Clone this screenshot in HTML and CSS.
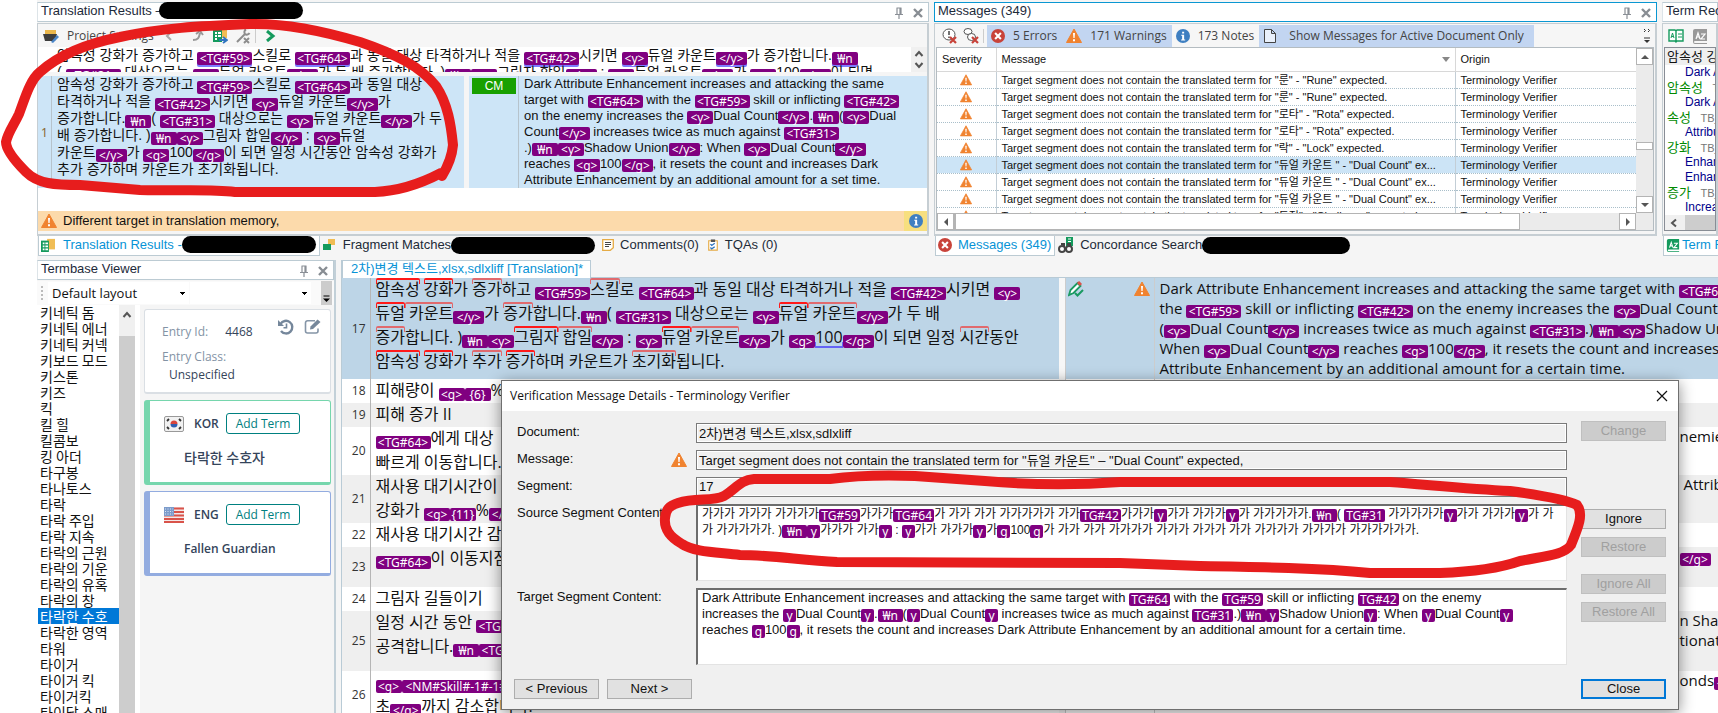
FILE: index.html
```html
<!DOCTYPE html>
<html lang="en">
<head>
<meta charset="utf-8">
<title>Translation Editor</title>
<link rel="stylesheet" href="styles.css">
</head>
<body>
<svg class="defs" aria-hidden="true">
  <symbol id="warn" viewBox="0 0 16 16"><path d="M8 1 15.5 14.5H.5Z" fill="#f08330" stroke="#f08330" stroke-linejoin="round"/><path d="M7 5h2l-.4 5H7.4zM7 11.2h2v2H7z" fill="#fff"/></symbol>
  <symbol id="err" viewBox="0 0 16 16"><circle cx="8" cy="8" r="8" fill="#c8433a"/><path d="m4.7 4.7 6.6 6.6m0-6.6-6.6 6.6" stroke="#fff" stroke-width="2.4"/></symbol>
  <symbol id="info" viewBox="0 0 16 16"><circle cx="8" cy="8" r="8" fill="#3f7fc1"/><path d="M7 3h2.3v2.2H7zM6 6.5h3.3V12h1.2v1.2H5.8V12H7V7.7H6z" fill="#fff"/></symbol>
  <symbol id="pin" viewBox="0 0 12 14"><path d="M3.5 2h5M4 2v6m3-6v6m1-6v6M2 8.5h8M6 9v4" fill="none" stroke="#8a8f96" stroke-width="1.2"/></symbol>
  <symbol id="x" viewBox="0 0 12 12"><path d="m2 2 8 8m0-8-8 8" stroke="#888d93" stroke-width="2.4"/></symbol>
  <symbol id="up" viewBox="0 0 10 10"><path d="m1.5 7 3.5-4 3.5 4" fill="none" stroke="#555" stroke-width="2"/></symbol>
  <symbol id="down" viewBox="0 0 10 10"><path d="m1.5 3 3.5 4 3.5-4" fill="none" stroke="#555" stroke-width="2"/></symbol>
  <symbol id="book" viewBox="0 0 16 16"><path d="M3 1h12v12H3a1 1 0 0 0 0 2h12v1H3a2 2 0 0 1-2-2V3a2 2 0 0 1 2-2z" fill="currentColor"/><path d="m4 11 2-6 2 6M4.8 9h2.4M9 6h4l-4 5h4" fill="none" stroke="#fff" stroke-width="1.2"/></symbol>
  <symbol id="memory" viewBox="0 0 16 16"><path d="M7 1h9v12H7z" fill="#f0bd55"/><path d="M0 3h9v13H0z" fill="#149a5d"/><path d="M2 5h2v2H2zm3 0h3v2H5zM2 8.500h2v2H2zm3 0h3v2H5zM2 12h2v2H2zm3 0h3v2H5z" fill="#fff"/></symbol>
</svg>

<main class="app">
<div class="top">
  <section class="dock">
    <header class="title"><span>Translation Results –</span><i class="pill pill-head"></i><span class="tools"><svg class="i14"><use href="#pin"/></svg><svg class="i12"><use href="#x"/></svg></span></header>
    <div class="frame">
      <div class="toolbar">
        <svg class="i16" viewBox="0 0 16 16"><path d="M2 2h11v4H2z" fill="#e9b64b"/><path d="M0 6h14l-2 7H2z" fill="#3d3d3d"/><path d="m8 14 6-7 2 2-6 6z" fill="#4a86c8"/></svg>
        <span class="proj">Project Settings</span>
        <svg class="ic-left" viewBox="0 0 14 14"><path d="m9 3-4 4 4 4" fill="none" stroke="#aaa" stroke-width="2"/></svg>
        <svg class="i14" viewBox="0 0 14 14"><path d="M3 11C8 11 9 9 10 4M6 5l4-3 3 4" fill="none" stroke="#999" stroke-width="2"/></svg>
        <svg class="i16" viewBox="0 0 16 16"><path d="M7 2h8v8H7z" fill="#f0bd55"/><path d="M1 2h9v12H1z" fill="#149a5d"/><path d="M3 4h2v2H3zm3 0h3v2H6zM3 7h2v2H3zm3 0h3v2H6zM3 10h2v2H3z" fill="#fff"/><path d="M7 12h7m-3-3 4 3-4 3" fill="none" stroke="#2f75c0" stroke-width="1.800"/></svg>
        <svg class="i16" viewBox="0 0 16 16"><path d="m2 14 8-8M10 6a3 3 0 0 1 1-4.500M10 6a3 3 0 0 0 4.500-1M9 10l5 5m0-5-5 5" fill="none" stroke="#8d8d8d" stroke-width="2"/></svg>
        <i class="sep"></i>
        <svg class="i12" viewBox="0 0 12 12"><path d="m3 1 6 5-6 5" fill="none" stroke="#149a5d" stroke-width="3"/></svg>
      </div>
      <div class="lookup">
        <div class="lookup-text ko">
          <p>암속성 강화가 증가하고 <b class="tg u">&lt;TG#59&gt;</b>스킬로 <b class="tg u">&lt;TG#64&gt;</b>과 동일 대상 타격하거나 적을 <b class="tg u">&lt;TG#42&gt;</b>시키면 <b class="y u">&lt;y&gt;</b>듀얼 카운트<b class="yy u">&lt;/y&gt;</b>가 증가합니다.<b class="y u">₩n</b></p>
          <p>( <b class="tg">&lt;TG#31&gt;</b> 대상으로는 <b class="y">&lt;y&gt;</b>듀얼 카운트<b class="yy">&lt;/y&gt;</b>가 두 배 증가합니다. )<b class="y">₩n</b><b class="y">&lt;y&gt;</b>그림자 합일<b class="yy">&lt;/y&gt;</b> : <b class="y">&lt;y&gt;</b>듀얼 카운트<b class="yy">&lt;/y&gt;</b>가 <b class="y">&lt;g&gt;</b>100<b class="yy">&lt;/g&gt;</b>이 되면</p>
        </div>
        <div class="mini-scroll"><svg class="i10"><use href="#up"/></svg><svg class="i10"><use href="#down"/></svg></div>
      </div>
      <div class="result">
        <div class="rnum">1</div>
        <div class="rsrc ko">
          <p>암속성 강화가 증가하고 <b class="tg">&lt;TG#59&gt;</b>스킬로 <b class="tg">&lt;TG#64&gt;</b>과 동일 대상</p>
          <p>타격하거나 적을 <b class="tg">&lt;TG#42&gt;</b>시키면 <b class="y">&lt;y&gt;</b>듀얼 카운트<b class="yy">&lt;/y&gt;</b>가</p>
          <p>증가합니다.<b class="y">₩n</b>( <b class="tg">&lt;TG#31&gt;</b> 대상으로는 <b class="y">&lt;y&gt;</b>듀얼 카운트<b class="yy">&lt;/y&gt;</b>가 두</p>
          <p>배 증가합니다. )<b class="y">₩n</b><b class="y">&lt;y&gt;</b>그림자 합일<b class="yy">&lt;/y&gt;</b> : <b class="y">&lt;y&gt;</b>듀얼</p>
          <p>카운트<b class="yy">&lt;/y&gt;</b>가 <b class="y">&lt;g&gt;</b>100<b class="yy">&lt;/g&gt;</b>이 되면 일정 시간동안 암속성 강화가</p>
          <p>추가 증가하며 카운트가 초기화됩니다.</p>
        </div>
        <i class="gap"></i>
        <div class="rcm"><span>CM</span></div>
        <div class="rtgt en">
          <p>Dark Attribute Enhancement increases and attacking the same</p>
          <p>target with <b class="tg">&lt;TG#64&gt;</b> with the <b class="tg">&lt;TG#59&gt;</b> skill or inflicting <b class="tg">&lt;TG#42&gt;</b></p>
          <p>on the enemy increases the <b class="y">&lt;y&gt;</b>Dual Count<b class="yy">&lt;/y&gt;</b>.<b class="y">₩n</b>(<b class="y">&lt;y&gt;</b>Dual</p>
          <p>Count<b class="yy">&lt;/y&gt;</b> increases twice as much against <b class="tg">&lt;TG#31&gt;</b></p>
          <p>.)<b class="y">₩n</b><b class="y">&lt;y&gt;</b>Shadow Union<b class="yy">&lt;/y&gt;</b>: When <b class="y">&lt;y&gt;</b>Dual Count<b class="yy">&lt;/y&gt;</b></p>
          <p>reaches <b class="y">&lt;g&gt;</b>100<b class="yy">&lt;/g&gt;</b>, it resets the count and increases Dark</p>
          <p>Attribute Enhancement by an additional amount for a set time.</p>
        </div>
      </div>
      <div class="filler"></div>
      <div class="notice"><svg class="i16"><use href="#warn"/></svg><span>Different target in translation memory,</span><em><svg class="i14"><use href="#info"/></svg></em></div>
    </div>
    <nav class="tabs">
      <a href="#" class="tab on"><svg class="i14"><use href="#memory"/></svg>Translation Results -<i class="pill pill-tab"></i></a>
      <a href="#" class="tab"><svg class="i12" viewBox="0 0 12 12"><path d="M5 0h7v6H5z" fill="#f0bd55"/><path d="M0 5h8v6H0z" fill="#149a5d"/></svg>Fragment Matches<i class="pill pill-frag"></i></a>
      <a href="#" class="tab slim"><svg class="i12" viewBox="0 0 12 12"><path d="M.7.7h10.600v8l-3 2.600H.7z" fill="#fff" stroke="#e5ab45" stroke-width="1.300"/><path d="M3 3.500h6M3 5.500h6M3 7.500h4" stroke="#444"/></svg>Comments(0)</a>
      <a href="#" class="tab slim"><svg class="i12" viewBox="0 0 12 14"><path d="M1 2h10v11H1z" fill="#fff" stroke="#e5ab45" stroke-width="1.300"/><path d="M3.500.5h5v3h-5z" fill="#555"/><path d="m3 6 1.500 1.500L8 5M3 10l1.500 1.500L8 9" fill="none" stroke="#2f75c0" stroke-width="1.500"/></svg>TQAs (0)</a>
    </nav>
  </section>

  <section class="dock">
    <header class="title active"><span>Messages (349)</span><span class="tools"><svg class="i14"><use href="#pin"/></svg><svg class="i12"><use href="#x"/></svg></span></header>
    <div class="frame">
      <div class="toolbar msgbar">
        <svg class="i16" viewBox="0 0 16 16"><ellipse cx="7" cy="6.500" rx="6" ry="5.500" fill="#fff" stroke="#555"/><path d="M7 3v4m0 1.500V10" stroke="#444" stroke-width="1.500"/><path d="m8 9 6 6m0-6-6 6" stroke="#c8433a" stroke-width="2.200"/></svg>
        <svg class="i16" viewBox="0 0 16 16"><ellipse cx="5" cy="3.500" rx="4" ry="3" fill="#fff" stroke="#555"/><ellipse cx="8.500" cy="9" rx="4" ry="3.500" fill="#fff" stroke="#555"/><path d="m9 9 6 6m0-6-6 6" stroke="#c8433a" stroke-width="2.200"/></svg>
        <i class="sep"></i>
        <button class="tb on" type="button"><svg class="i14"><use href="#err"/></svg>5 Errors</button>
        <button class="tb on" type="button"><svg class="i16"><use href="#warn"/></svg>171 Warnings</button>
        <button class="tb" type="button"><svg class="i14"><use href="#info"/></svg>173 Notes</button>
        <button class="tb on wide" type="button"><svg class="i14" viewBox="0 0 14 14"><path d="M1.500.5h7l4 4v9h-11zM8.500.5v4h4" fill="#e9f0fb" stroke="#444"/></svg>Show Messages for Active Document Only</button>
        <svg class="more" viewBox="0 0 8 16"><path d="m1 1 1.500 1.500L1 4m4-3 1.500 1.500L5 4M1 10h6" fill="none" stroke="#333"/><path d="M1 12h6L4 15z" fill="#333"/></svg>
      </div>
      <div class="listbox">
        <div class="view">
        <table class="msgs">
          <colgroup><col class="c1"><col class="c2"><col class="c3"></colgroup>
          <thead><tr><th>Severity</th><th>Message<svg class="sort" viewBox="0 0 8 5"><path d="M0 0h8L4 5z" fill="#888"/></svg></th><th>Origin</th></tr></thead>
          <tbody>
          <tr><td><svg class="i12"><use href="#warn"/></svg></td><td>Target segment does not contain the translated term for "룬" - "Rune" expected.</td><td>Terminology Verifier</td></tr>
          <tr><td><svg class="i12"><use href="#warn"/></svg></td><td>Target segment does not contain the translated term for "룬" - "Rune" expected.</td><td>Terminology Verifier</td></tr>
          <tr><td><svg class="i12"><use href="#warn"/></svg></td><td>Target segment does not contain the translated term for "로타" - "Rota" expected.</td><td>Terminology Verifier</td></tr>
          <tr><td><svg class="i12"><use href="#warn"/></svg></td><td>Target segment does not contain the translated term for "로타" - "Rota" expected.</td><td>Terminology Verifier</td></tr>
          <tr><td><svg class="i12"><use href="#warn"/></svg></td><td>Target segment does not contain the translated term for "락" - "Lock" expected.</td><td>Terminology Verifier</td></tr>
          <tr class="sel"><td><svg class="i12"><use href="#warn"/></svg></td><td>Target segment does not contain the translated term for "듀얼 카운트 " - "Dual Count" ex...</td><td>Terminology Verifier</td></tr>
          <tr><td><svg class="i12"><use href="#warn"/></svg></td><td>Target segment does not contain the translated term for "듀얼 카운트 " - "Dual Count" ex...</td><td>Terminology Verifier</td></tr>
          <tr><td><svg class="i12"><use href="#warn"/></svg></td><td>Target segment does not contain the translated term for "듀얼 카운트 " - "Dual Count" ex...</td><td>Terminology Verifier</td></tr>
          <tr><td><svg class="i12"><use href="#warn"/></svg></td><td>Target segment does not contain the translated term for "도전" - "Challenge" expected.</td><td>Terminology Verifier</td></tr>
          </tbody>
        </table>
        </div>
        <div class="vs"><i class="sb"><svg viewBox="0 0 8 8"><path d="M0 6h8L4 2z"/></svg></i><i class="vthumb"></i><i class="sb"><svg viewBox="0 0 8 8"><path d="M0 2h8L4 6z"/></svg></i></div>
        <div class="hs"><i class="sb"><svg viewBox="0 0 8 8"><path d="M6 0v8L2 4z"/></svg></i><i class="hthumb"></i><i class="sb end"><svg viewBox="0 0 8 8"><path d="M2 0v8l4-4z"/></svg></i></div>
      </div>
    </div>
    <nav class="tabs">
      <a href="#" class="tab on msgtab"><svg class="i14"><use href="#err"/></svg>Messages (349)</a>
      <a href="#" class="tab conc"><svg class="i16" viewBox="0 0 16 16"><path d="M8 0h7v9H8z" fill="#149a5d"/><path d="M10 2h3M10 4.500h3" stroke="#fff"/><circle cx="4" cy="12" r="3" fill="#fff" stroke="#444" stroke-width="2"/><circle cx="11" cy="12" r="3" fill="#fff" stroke="#444" stroke-width="2"/><path d="M3 7h3v3M9 7h3v3" fill="none" stroke="#444" stroke-width="2"/></svg>Concordance Search<i class="pill pill-conc"></i></a>
    </nav>
  </section>

  <section class="dock">
    <header class="title"><span>Term Recognition</span></header>
    <div class="frame">
      <div class="toolbar termbar">
        <svg class="i16 green" viewBox="0 0 16 16"><path d="M1 2h6l1 1 1-1h6v11H9l-1 1-1-1H1zM8 3v10" fill="#fff" stroke="#149a5d" stroke-width="1.400"/><path d="m3 10 1.500-5L6 10M3.500 8.500h2M10 6h4M10 9h4" fill="none" stroke="#149a5d"/></svg>
        <svg class="i16 gray"><use href="#book"/></svg>
        <svg class="i16 green"><use href="#book"/></svg>
      </div>
      <div class="terms">
        <p class="h">암속성 강화</p>
        <p class="d">Dark Attribute</p>
        <p class="g">암속성 <small>TB_</small></p>
        <p class="d">Dark Attribute</p>
        <p class="g">속성 <small>TB_</small></p>
        <p class="d">Attribute</p>
        <p class="g">강화 <small>TB_</small></p>
        <p class="d">Enhance</p>
        <p class="d">Enhancement</p>
        <p class="g">증가 <small>TB_</small></p>
        <p class="d">Increase</p>
        <div class="tscroll"><svg class="i10" viewBox="0 0 10 10"><path d="M7 1.500 3 5l4 3.500" fill="none" stroke="#555" stroke-width="2"/></svg><i></i></div>
      </div>
    </div>
    <nav class="tabs"><a href="#" class="tab on last"><svg class="i14 green"><use href="#book"/></svg>Term Recognition</a></nav>
  </section>
</div>

<div class="bottom">
  <section class="dock termbase">
    <header class="title"><span>Termbase Viewer</span><span class="tools"><svg class="i14"><use href="#pin"/></svg><svg class="i12"><use href="#x"/></svg></span></header>
    <div class="layoutbar">
      <i class="grip"></i>
      <select class="sel1" aria-label="Layout"><option>Default layout</option></select>
      <select class="sel2" aria-label="Filter"><option></option></select>
      <svg class="ovf" viewBox="0 0 11 24"><path d="M0 0h11v24H0z" fill="#ccc"/><path d="M2.500 15h6" stroke="#000"/><path d="M2 17.500h7L5.500 21z"/></svg>
    </div>
    <div class="tbody">
      <ul class="words">
        <li>키네틱 돔</li><li>키네틱 에너</li><li>키네틱 커넥</li><li>키보드 모드</li><li>키스톤</li><li>키즈</li><li>킥</li><li>킬 힐</li><li>킬콤보</li><li>킹 아더</li><li>타구봉</li><li>타나토스</li><li>타락</li><li>타락 주입</li><li>타락 지속</li><li>타락의 근원</li><li>타락의 기운</li><li>타락의 유혹</li><li>타락의 창</li><li class="sel">타락한 수호</li><li>타락한 영역</li><li>타워</li><li>타이거</li><li>타이거 킥</li><li>타이거킥</li><li>타이달 스매</li>
      </ul>
      <div class="wscroll"><svg class="i10"><use href="#up"/></svg><i></i></div>
      <div class="cards">
        <article class="card entry">
          <div class="eid"><span>Entry Id:</span><strong>4468</strong>
            <svg class="i16" viewBox="0 0 16 16"><path d="M2.500 5A6.300 6.300 0 1 1 3 12" fill="none" stroke="#75879b" stroke-width="2.400"/><path d="M0 1v6h6z" fill="#75879b"/><path d="M8.500 4.500v4.200H5.500" fill="none" stroke="#75879b" stroke-width="1.600"/></svg>
            <svg class="i18" viewBox="0 0 18 16"><path d="M11 1.800H3.500a2 2 0 0 0-2 2V12a2 2 0 0 0 2 2H12a2 2 0 0 0 2-2V9.500" fill="none" stroke="#8595a7" stroke-width="1.600"/><path d="m6 10.500.5-3L13.500.500l3 2.500-7.500 7z" fill="#75879b"/></svg>
          </div>
          <div class="ecl">Entry Class:</div>
          <div class="eun">Unspecified</div>
        </article>
        <article class="card kor">
          <div class="lang">
            <svg class="flag" viewBox="0 0 20 16"><rect x=".5" y=".5" width="19" height="15" rx="1.500" fill="#f1f1f1" stroke="#999"/><path d="M6.500 8a3.500 3.500 0 0 1 7 0z" fill="#d8453c"/><path d="M6.500 8a3.500 3.500 0 0 0 7 0z" fill="#2f5fb0"/><path d="m3 5 2-2m-2 8 2 2m10-10 2 2m-2 8 2-2" stroke="#333" stroke-width="1.800"/></svg>
            <strong>KOR</strong><button type="button">Add Term</button></div>
          <div class="term">타락한 수호자</div>
        </article>
        <article class="card eng">
          <div class="lang">
            <svg class="flag" viewBox="0 0 20 16"><rect width="20" height="16" rx="1.500" fill="#f3e9e9"/><path d="M0 1.500h20M0 5h20M0 8.500h20M0 12h20M0 15h20" stroke="#d9534a" stroke-width="1.800"/><path d="M0 0h10v9H0z" fill="#7c9ccb"/><path d="M1 2h8M1 4.500h8M1 7h8" stroke="#dce6f5" stroke-dasharray="1 1.500"/></svg>
            <strong>ENG</strong><button type="button">Add Term</button></div>
          <div class="term">Fallen Guardian</div>
        </article>
      </div>
    </div>
  </section>

  <section class="editor">
    <div class="etabs"><a href="#">2차)변경 텍스트,xlsx,sdlxliff [Translation]*</a></div>
    <table class="grid">
      <colgroup><col class="n"><col class="s"><col class="gp"><col class="st"><col class="t"></colgroup>
      <tbody>
      <tr class="cur h100"><td>17</td><td class="k">
        <p><span class="m">암속성</span> <span class="m">강화</span>가 <span class="m l">증가</span>하고 <b class="tg">&lt;TG#59&gt;</b><span class="m l">스킬</span>로 <b class="tg">&lt;TG#64&gt;</b>과 동일 대상 타격하거나 적을 <b class="tg">&lt;TG#42&gt;</b>시키면 <b class="y">&lt;y&gt;</b></p>
        <p><span class="m">듀얼</span><span class="m l"> 카운트</span><b class="yy">&lt;/y&gt;</b>가 <span class="m l">증가</span>합니다.<b class="y">₩n</b>( <b class="tg">&lt;TG#31&gt;</b> 대상으로는 <b class="y">&lt;y&gt;</b><span class="m">듀얼</span><span class="m l"> 카운트</span><b class="yy">&lt;/y&gt;</b>가 두 배</p>
        <p><span class="m l">증가</span>합니다. )<b class="y">₩n</b><b class="y">&lt;y&gt;</b><span class="m">그림자</span><span class="m l"> 합일</span><b class="yy">&lt;/y&gt;</b> : <b class="y">&lt;y&gt;</b><span class="m">듀얼</span><span class="m l"> 카운트</span><b class="yy">&lt;/y&gt;</b>가 <b class="y">&lt;g&gt;</b><span class="m num">100</span><b class="yy">&lt;/g&gt;</b>이 되면 일정 <span class="m l">시간</span>동안</p>
        <p><span class="m">암속성</span> <span class="m">강화</span>가 <span class="m l">추가</span> <span class="m">증가</span>하며 카운트가 <span class="m l">초기화</span>됩니다.</p>
      </td><td></td><td class="status"><div>
        <svg class="i16" viewBox="0 0 16 16"><path d="m1 14 1.500-5 7-7 3 3-7 7z" fill="#fff" stroke="#1a9a62" stroke-width="1.800"/><path d="m10 1 3 3" stroke="#d9534a" stroke-width="3"/><path d="m7 12 2.500 2.500L15 9" fill="none" stroke="#1a9a62" stroke-width="2"/></svg>
        <svg class="i16"><use href="#warn"/></svg></div></td><td class="e">
        <p>Dark Attribute Enhancement increases and attacking the same target with <b class="tg">&lt;TG#64&gt;</b></p>
        <p>the <b class="tg">&lt;TG#59&gt;</b> skill or inflicting <b class="tg">&lt;TG#42&gt;</b> on the enemy increases the <b class="y">&lt;y&gt;</b>Dual Count</p>
        <p>(<b class="y">&lt;y&gt;</b>Dual Count<b class="yy">&lt;/y&gt;</b> increases twice as much against <b class="tg">&lt;TG#31&gt;</b>.)<b class="y">₩n</b><b class="y">&lt;y&gt;</b>Shadow Union</p>
        <p>When <b class="y">&lt;y&gt;</b>Dual Count<b class="yy">&lt;/y&gt;</b> reaches <b class="y">&lt;g&gt;</b>100<b class="yy">&lt;/g&gt;</b>, it resets the count and increases Dark</p>
        <p>Attribute Enhancement by an additional amount for a certain time.</p>
      </td></tr>
      <tr class="h24"><td>18</td><td class="k"><p>피해량이 <b class="y">&lt;g&gt;</b><b class="y">{6}</b>%</p></td><td></td><td></td><td></td></tr>
      <tr class="h24 alt"><td>19</td><td class="k"><p>피해 증가 II</p></td><td></td><td></td><td></td></tr>
      <tr class="h48"><td>20</td><td class="k"><p><b class="tg">&lt;TG#64&gt;</b>에게 대상</p><p>빠르게 이동합니다.</p></td><td></td><td></td><td class="e tail"><p>nemies</p></td></tr>
      <tr class="h48 alt"><td>21</td><td class="k"><p>재사용 대기시간이</p><p>강화가 <b class="y">&lt;g&gt;</b><b class="y">{11}</b>%<b class="yy">&lt;/g&gt;</b></p></td><td></td><td></td><td class="e tail"><p>&nbsp;Attribute</p></td></tr>
      <tr class="h24"><td>22</td><td class="k"><p>재사용 대기시간 감소</p></td><td></td><td></td><td></td></tr>
      <tr class="h40 alt"><td>23</td><td class="k"><p><b class="tg">&lt;TG#64&gt;</b>이 이동지점</p></td><td></td><td></td><td class="e tail"><p><b class="yy">&lt;/g&gt;</b></p></td></tr>
      <tr class="h24"><td>24</td><td class="k"><p>그림자 길들이기</p></td><td></td><td></td><td></td></tr>
      <tr class="h60 alt"><td>25</td><td class="k"><p>일정 시간 동안 <b class="tg">&lt;TG#64&gt;</b></p><p>공격합니다.<b class="y">₩n</b><b class="tg">&lt;TG#64&gt;</b></p></td><td></td><td></td><td class="e tail"><p>n Shadow</p><p>tionate</p></td></tr>
      <tr class="h48"><td>26</td><td class="k"><p><b class="y">&lt;g&gt;</b><b class="nm">&lt;NM#Skill#-1#-1#1&gt;</b></p><p>초<b class="yy">&lt;/g&gt;</b>까지 감소합니다.</p></td><td></td><td></td><td class="e tail"><p>onds<b class="yy">&lt;/g&gt;</b></p></td></tr>
      </tbody>
    </table>
  </section>
</div>
</main>

<section class="dialog" role="dialog" aria-labelledby="dt">
  <header><h2 id="dt">Verification Message Details - Terminology Verifier</h2><button class="xbtn" type="button" aria-label="Close window"><svg class="i12" viewBox="0 0 12 12"><path d="m1 1 10 10m0-10L1 11" stroke="#111" stroke-width="1.200"/></svg></button></header>
  <form class="dbody">
    <div class="fields">
      <label for="doc">Document:</label><span></span><input id="doc" readonly value="2차)변경 텍스트,xlsx,sdlxliff">
      <label for="msg">Message:</label><svg class="i16"><use href="#warn"/></svg><input id="msg" readonly value='Target segment does not contain the translated term for "듀얼 카운트" – "Dual Count" expected,'>
      <label for="seg">Segment:</label><span></span><input id="seg" readonly value="17">
      <div class="lab" id="ls">Source Segment Content:</div><span></span>
      <div class="box src" role="textbox" aria-readonly="true" aria-labelledby="ls">
        <p>가가가 가가가 가가가가<b class="tg">TG#59</b>가가가<b class="tg">TG#64</b>가 가가 가가 가가가가가 가가<b class="tg">TG#42</b>가가가<b class="y">y</b>가가 가가가<b class="y">y</b>가 가가가가가.<b class="yy">₩n</b>( <b class="tg">TG#31</b> 가가가가가<b class="y">y</b>가가 가가가<b class="y">y</b>가 가</p>
        <p>가 가가가가가. )<b class="yy">₩n</b><b class="y">y</b>가가가 가가<b class="y">y</b> : <b class="y">y</b>가가 가가가<b class="y">y</b>가<b class="y">g</b>100<b class="y">g</b>가 가가 가가 가가가가 가가가 가가가 가가 가가가가 가가가가 가가가가가가.</p>
      </div>
      <div class="lab" id="lt">Target Segment Content:</div><span></span>
      <div class="box en" role="textbox" aria-readonly="true" aria-labelledby="lt">
        <p>Dark Attribute Enhancement increases and attacking the same target with <b class="tg">TG#64</b> with the <b class="tg">TG#59</b> skill or inflicting <b class="tg">TG#42</b> on the enemy</p>
        <p>increases the <b class="y">y</b>Dual Count<b class="y">y</b>.<b class="yy">₩n</b>(<b class="y">y</b>Dual Count<b class="y">y</b> increases twice as much against <b class="tg">TG#31</b>.)<b class="yy">₩n</b><b class="y">y</b>Shadow Union<b class="y">y</b>: When <b class="y">y</b>Dual Count<b class="y">y</b></p>
        <p>reaches <b class="y">g</b>100<b class="y">g</b>, it resets the count and increases Dark Attribute Enhancement by an additional amount for a certain time.</p>
      </div>
    </div>
    <div class="side">
      <button type="button" disabled>Change</button>
      <button type="button" class="gap-l">Ignore</button>
      <button type="button" class="gap-s" disabled>Restore</button>
      <button type="button" class="gap-m" disabled>Ignore All</button>
      <button type="button" class="gap-s" disabled>Restore All</button>
    </div>
    <div class="foot"><button type="button">&lt; Previous</button><button type="button">Next &gt;</button><button type="button" class="close">Close</button></div>
  </form>
</section>

<svg class="marks" viewBox="0 0 1718 713" aria-hidden="true">
  <path d="M441 173C420 184 400 191 375 192L235 192C210 189 190 191 140 190L80 185C55 185 38 184 26 172C14 160 6 150 6 142C8 132 14 125 19 114C25 98 30 80 40 72C60 54 90 43 120 37C160 28 200 26 250 24C290 23 330 33 360 42C395 54 420 66 436 86C448 104 451 125 453 145C452 157 448 166 442 176"/>
  <path d="M678 503C696 497 712 502 724 496C736 489 740 480 754 479L830 479C860 475 890 475 915 476L985 481C1030 485 1080 485 1120 482L1390 482C1430 485 1470 489 1510 491C1540 495 1565 499 1577 505C1584 514 1578 528 1571 545C1564 555 1545 556 1520 561C1500 568 1470 572 1440 573L1370 573C1320 568 1260 567 1200 566L1120 563L837 562C800 560 770 555 740 555C715 552 694 552 682 544C668 536 664 528 665 518C666 509 669 506 678 503Z"/>
</svg>
</body>
</html>
```
FILE: styles.css
```css
* { box-sizing: border-box; }
body { margin: 0; height: 100vh; overflow: hidden; position: relative; background: #fff; color: #111; font: 13px/16px "Liberation Sans", "Noto Sans CJK KR", sans-serif; }
p, h2, ul { margin: 0; padding: 0; font: inherit; white-space: pre; }
a { color: inherit; text-decoration: none; }
i, em { font-style: normal; flex: none; }
svg { flex: none; }
.defs { position: absolute; width: 0; height: 0; }
.i10 { width: 10px; height: 10px; }
.i12 { width: 12px; height: 12px; }
.i14 { width: 14px; height: 14px; }
.i16 { width: 16px; height: 16px; }
.i18 { width: 18px; height: 16px; }
.green { color: #149a5d; }
.gray { color: #999; }

.app { height: 100%; margin-left: 37px; padding-top: 2px; background: #f5f5f5; display: flex; flex-direction: column; }
.top { display: grid; grid-template-columns: minmax(0, 892fr) minmax(0, 723fr) minmax(0, 56fr); gap: 5px; height: 258px; flex: none; }
.dock { display: flex; flex-direction: column; min-width: 0; overflow: hidden; }
.title { display: flex; align-items: center; height: 20px; flex: none; padding: 0 4px 3px 3px; border: 1px solid #bccbd3; border-left-color: #dde4e8; background: #fff; white-space: nowrap; color: #1d2a3a; }
.title.active { border-color: #0a97d2; }
.tools { display: flex; align-items: center; gap: 6px; margin-left: auto; padding-top: 4px; }
.pill { display: block; height: 17px; border-radius: 9px; background: #000; }
.pill-head { width: 144px; margin-left: -4px; }
.pill-tab { width: 134px; }
.pill-frag { width: 144px; }
.pill-conc { width: 148px; }
.frame { flex: 1; min-height: 0; margin-top: 1px; border: 1px solid #c6ced3; border-width: 1px 2px 2px 1px; display: flex; flex-direction: column; overflow: hidden; }
.toolbar { display: flex; align-items: center; height: 23px; flex: none; padding-left: 5px; background: #f6f6f6; font: 12px/20px "Open Sans", sans-serif; color: #444; white-space: nowrap; }
.proj { margin: 0 8px; }
.ic-left { width: 14px; height: 14px; margin-right: 14px; }
.toolbar .i14 + .i16 { margin: 0 7px 0 8px; }
.sep { width: 1px; height: 14px; margin: 0 8px 0 4px; background: #ccc; }

.ko { font: 14px/17px "Liberation Sans", "Noto Sans CJK KR", sans-serif; }
.en { font: 13px/16px "Liberation Sans", "Noto Sans CJK KR", sans-serif; }
.ko p { height: 17px; }
.en p, .src p { height: 16px; }
b { display: inline-block; height: 13px; line-height: 13px; border-radius: 2px; background: #800080; color: #fff; font-size: 12px; font-weight: 400; font-family: "Noto Sans", "Noto Sans CJK KR", sans-serif; text-align: center; vertical-align: -3px; }
.tg { width: 55px; }
.y { width: 26px; }
.yy { width: 31px; }
.nm { padding: 0 4px; }
.en b { vertical-align: -2px; }
.u { box-shadow: 0 2px #7d7dff; }

.lookup { display: flex; height: 25px; flex: none; background: #fff; overflow: hidden; }
.lookup-text { flex: 1; min-width: 0; padding-left: 19px; overflow: hidden; }
.mini-scroll { width: 16px; background: #f0f0f0; display: flex; flex-direction: column; align-items: center; justify-content: space-between; padding: 2px 0; }
.result { display: grid; grid-template-columns: 14px minmax(0, 412fr) 5px 50px minmax(0, 408fr); flex: none; height: 112px; margin-top: 4px; background: #cde5f7; }
.rnum { display: flex; align-items: center; justify-content: center; border-right: 1px solid #b6c3cc; color: #8a6a35; font: 12px "Noto Sans", sans-serif; }
.rsrc { padding-left: 5px; overflow: hidden; }
.gap { background: #f5f5f5; }
.rcm { padding: 2px 2px 0 3px; border-right: 1px solid #b6c3cc; }
.rcm span { display: block; height: 16px; background: #18a000; color: #fff; text-align: center; font: 12px/17px "Liberation Sans", sans-serif; }
.rtgt { padding: 0 0 0 5px; overflow: hidden; }
.filler { flex: 1; background: #fff; }
.notice { display: flex; align-items: center; gap: 6px; height: 20px; flex: none; margin-bottom: 3px; padding-left: 3px; background: #fcdaab; }
.notice em { display: flex; align-items: center; justify-content: center; width: 23px; height: 20px; margin-left: auto; background: #f7df7f; }

.tabs { display: flex; height: 24px; flex: none; white-space: nowrap; padding-left: 1px; }
.tab { display: flex; align-items: center; height: 20px; padding: 0 3px 2px; color: #222b38; }
.tab.on { background: #fff; border: 1px solid #bccbd3; border-top: 0; color: #0793d6; padding: 0 3px 2px 2px; }
.tab svg { margin-right: 8px; }
.tab.slim { padding: 0 4px 2px; }
.tab.slim svg { margin-right: 6px; }
.tab.msgtab svg { margin-right: 6px; }
.tab.conc svg { margin-right: 6px; }
.tab.last { padding-right: 0; }
.tab.last svg { margin-right: 2px; }

.msgbar { padding-left: 7px; }
.msgbar .i16 + .i16 { margin-left: 5px; }
.msgbar .sep { margin: 0 3px 0 4px; }
.tb { display: flex; align-items: center; height: 22px; padding: 0 5px 0 4px; border: 0; background: transparent; font: 12px/20px "Open Sans", sans-serif; color: #444; white-space: nowrap; }
.tb.on { background: #c2d5f1; }
.tb svg { margin-right: 8px; }
.tb.wide svg { margin-right: 12px; }
.tb.wide { padding-right: 10px; }
.more { width: 8px; height: 16px; margin: 0 4px 0 auto; }
.listbox { flex: 1; min-height: 0; margin: 0 1px 3px; border: 1px solid #b4bcc1; background: #fff; display: grid; grid-template: minmax(0, 1fr) 17px / minmax(0, 1fr) 17px; }
.view { overflow: hidden; }
.msgs { width: 100%; table-layout: fixed; border-collapse: collapse; font: 11px/16px "Liberation Sans", "Noto Sans CJK KR", sans-serif; }
.c1 { width: 59px; }
.c3 { width: 181px; }
.msgs th { height: 23px; padding: 0 5px; text-align: left; font-weight: 400; border-right: 1px solid #d8d8d8; border-bottom: 1px solid #d8d8d8; }
.msgs td { height: 17px; padding: 0 0 0 5px; border-right: 1px solid #c3ced6; border-bottom: 1px dotted #a9bfca; white-space: nowrap; overflow: hidden; line-height: 14px; }
.msgs td:first-child { padding: 0; }
.msgs td svg { display: block; margin: 0 auto; }
.msgs th:last-child, .msgs td:last-child { border-right: 0; }
.msgs .sel td { background: #cce4f6; }
.sort { float: right; width: 8px; height: 5px; margin-top: 6px; }
.vs { display: flex; flex-direction: column; background: #ebebeb; }
.hs { display: flex; grid-column: 1; background: #ebebeb; }
.listbox::after { content: ""; background: #ebebeb; }
.sb { display: flex; align-items: center; justify-content: center; width: 17px; height: 17px; background: #fff; border: 1px solid #b4b4b4; }
.sb svg { width: 8px; height: 8px; fill: #555; }
.vthumb { height: 8px; margin: auto 0 46px; background: #fff; border: 1px solid #b4b4b4; }
.hthumb { flex: 0 1 81%; background: #fff; border: 1px solid #b4b4b4; border-left-width: 2px; }
.end { margin-left: auto; }

.termbar { gap: 8px; }
.terms { flex: 1; min-height: 0; margin: 0 0 3px 1px; border: 1px solid #888d95; background: #fff; overflow: hidden; display: flex; flex-direction: column; }
.terms p { height: 15px; flex: none; line-height: 15px; padding-left: 2px; font-size: 13px; }
.terms .h { height: 17px; line-height: 17px; background: #efefef; }
.terms .d { color: #00008b; padding-left: 20px; font-size: 12px; }
.terms .g { color: #008a00; }
.terms small { font-size: 11px; color: #777; margin-left: 6px; }
.tscroll { display: flex; align-items: center; gap: 6px; height: 16px; flex: none; margin-top: auto; padding-left: 4px; background: #f0f0f0; }
.tscroll i { flex: 1; height: 16px; background: #cdcdcd; }

.bottom { display: grid; grid-template-columns: 299px minmax(0, 1fr); gap: 5px; flex: 1; min-height: 0; }
.termbase { border-right: 2px solid #c2d0d8; }
.layoutbar { display: flex; align-items: center; height: 24px; flex: none; margin-top: 1px; background: #fafafa; }
.grip { width: 2px; height: 14px; margin: 0 5px 0 4px; background: repeating-linear-gradient(#bbb 0 2px, transparent 2px 4px); }
.layoutbar select { height: 22px; border: 0; appearance: none; font: 13px "Open Sans", sans-serif; padding: 0 0 0 4px; color: #111; background: linear-gradient(#000, #000) right 4px top 10px / 5px 1px, linear-gradient(#000, #000) right 5px top 11px / 3px 1px, linear-gradient(#000, #000) right 6px top 12px / 1px 1px, #fff; background-repeat: no-repeat; }
.sel1 { width: 141px; }
.sel2 { width: 121px; margin-left: 1px; }
.ovf { width: 11px; height: 24px; margin-left: auto; margin-right: 2px; }
.tbody { display: grid; grid-template-columns: 82px 16px minmax(0, 1fr); flex: 1; min-height: 0; background: #f5f5f5; overflow: hidden; }
.words { list-style: none; overflow: hidden; background: #fff; font: 14px/16px "Noto Sans CJK KR", sans-serif; white-space: nowrap; padding-left: 1px; margin-top: -1px; }
.words li { height: 16px; padding-left: 2px; }
.words .sel { background: #0078d7; color: #fff; }
.wscroll { background: #f0f0f0; display: flex; flex-direction: column; align-items: center; padding-top: 5px; }
.wscroll i { flex: 1; width: 16px; margin-top: 16px; background: #cdcdcd; }
.cards { border-left: 5px solid #fff; padding: 4px 3px 0 4px; display: flex; flex-direction: column; gap: 6px; }
.card { height: 85px; flex: none; background: #fff; border: 1px solid #dadfe4; border-bottom-width: 2px; border-radius: 3px; color: #34445a; font: 12px/18px "Open Sans", "Noto Sans CJK KR", sans-serif; }
.eid { display: flex; align-items: center; padding: 7px 8px 0 17px; height: 26px; color: #8393a5; }
.eid strong { margin: 0 auto 0 17px; font-weight: 400; color: #34445a; }
.eid span, .eid strong { padding-top: 10px; }
.eid .i18 { margin-left: 10px; }
.ecl { padding: 12px 0 0 17px; color: #8393a5; }
.eun { padding-left: 24px; }
.kor { border-color: #76d6ad; border-width: 1px 1px 3px 6px; }
.eng { border-color: #93ace0; border-width: 1px 1px 3px 6px; }
.lang { display: flex; align-items: center; padding: 12px 0 0 14px; }
.flag { width: 20px; height: 16px; margin-right: 10px; }
.lang strong { width: 32px; font-weight: 600; }
.lang button { width: 74px; height: 21px; padding: 0; border: 1px solid #008080; border-radius: 3px; background: #fff; color: #008080; font: 12px/17px "Open Sans", sans-serif; }
.term { padding: 15px 0 0 34px; font-size: 14px; font-weight: 500; }
.eng .term { font-size: 12px; font-weight: 600; }

.editor { display: flex; flex-direction: column; overflow: hidden; border-left: 1px solid #b9cbd6; }
.etabs { display: flex; height: 18px; flex: none; border-bottom: 1px solid #b9cbd6; }
.etabs a { height: 18px; padding: 0 7px 0 8px; background: #fff; border: 1px solid #b9cbd6; border-bottom: 0; color: #0793d6; line-height: 15px; white-space: nowrap; }
.grid { width: 100%; flex: none; table-layout: fixed; border-collapse: collapse; background: #fff; }
.grid td { padding: 0; vertical-align: top; overflow: hidden; }
.n { width: 28px; }
.s { width: 689px; }
.gp { width: 6px; }
.st { width: 89px; }
.grid td:first-child { vertical-align: middle; text-align: right; padding-right: 4px; border-right: 1px solid #b5b5b5; font: 12px/18px "Open Sans", sans-serif; color: #333; }
.grid td:nth-child(3) { background: #f7f7f7; border-right: 1px solid #ccc; }
.grid td:nth-child(4) { border-right: 1px solid #ccc; }
.k { font: 16px/24px "Open Sans", "Noto Sans CJK KR", sans-serif; }
.grid .k, .grid .e { padding-left: 5px; }
.k p { height: 24px; margin-top: -1px; margin-bottom: 1px; }
.e { font: 15px/20px "Open Sans", sans-serif; }
.e p { height: 20px; }
.e b { vertical-align: -2px; }
.grid .tail { padding-left: 525px; }
.alt td { background: #efefef; }
.cur td { background: #bdd5e7; }
.h24 { height: 24px; }
.h40 { height: 40px; }
.h48 { height: 48px; }
.h60 { height: 60px; }
.h100 { height: 101px; }
.tail p { margin-top: -1px; margin-bottom: 1px; }
.status div { display: flex; justify-content: space-between; padding: 3px 4px 0 2px; }
.m { position: relative; }
.m::before { content: ""; position: absolute; left: 0; right: 0; top: 0; height: 4px; border: 2px solid #ff1a1a; border-width: 2px 1px 0; border-radius: 2px 2px 0 0; }
.m.l::before { border-color: #e06a6e; }
.m.num::before { top: auto; bottom: 0; border-color: #6464f5; border-width: 0 1px 2px; border-radius: 0; }

.dialog { position: absolute; left: 501px; right: 39px; top: 380px; bottom: 3px; display: flex; flex-direction: column; border: 1px solid #6f6f6f; background: #f0f0f0; box-shadow: 0 3px 14px rgba(0, 0, 0, .45); }
.dialog header { display: flex; align-items: center; justify-content: space-between; height: 30px; flex: none; padding: 0 10px 0 8px; background: #fff; }
.dialog h2 { font: 12px/18px "Open Sans", sans-serif; }
.xbtn { display: flex; padding: 0; border: 0; background: none; }
.dbody { flex: 1; display: grid; grid-template: 1fr 20px / minmax(0, 1fr) 85px; column-gap: 14px; padding: 10px 12px; }
.fields { display: grid; grid-template-columns: 147px 18px minmax(0, 1fr); column-gap: 7px; grid-auto-rows: max-content; row-gap: 7px; padding: 2px 0 0 3px; }
.fields label, .lab { padding-top: 1px; white-space: nowrap; }
.fields > svg { margin-top: 2px; }
.fields input { width: 100%; height: 20px; padding: 0 2px 2px; border: 1px solid #7a7a7a; outline: 1px solid #fff; outline-offset: -2px; background: #f0f0f0; font: 13px "Liberation Sans", "Noto Sans CJK KR", sans-serif; color: #111; }
.box { height: 77px; padding: 0 4px; background: #fff; border: 1px solid #e3e3e3; border-top: 2px solid #6d6d6d; border-left: 2px solid #6d6d6d; overflow: hidden; }
.src { font: 12px/16px "Liberation Sans", "Noto Sans CJK KR", sans-serif; }
.box b { vertical-align: -2px; }
.box .tg { width: 41px; }
.box .y { width: 13px; }
.box .yy { width: 25px; }
.side { display: flex; flex-direction: column; }
.dbody button { height: 20px; padding: 0 0 1px; background: #e1e1e1; border: 1px solid #adadad; font: 13px "Liberation Sans", sans-serif; color: #111; }
.dbody button:disabled { background: #ccc; border-color: #bfbfbf; color: #a0a0a0; }
.dbody .gap-l { margin-top: 68px; }
.gap-s { margin-top: 8px; }
.gap-m { margin-top: 17px; }
.foot { grid-column: 1 / 3; display: flex; gap: 8px; }
.foot button { width: 85px; }
.dbody .close { margin-left: auto; border: 2px solid #0078d7; }

.marks { position: absolute; inset: 0; width: 100%; height: 100%; pointer-events: none; }
.marks path { fill: none; stroke: #e71d1d; stroke-width: 10px; stroke-linecap: round; stroke-linejoin: round; }
```
